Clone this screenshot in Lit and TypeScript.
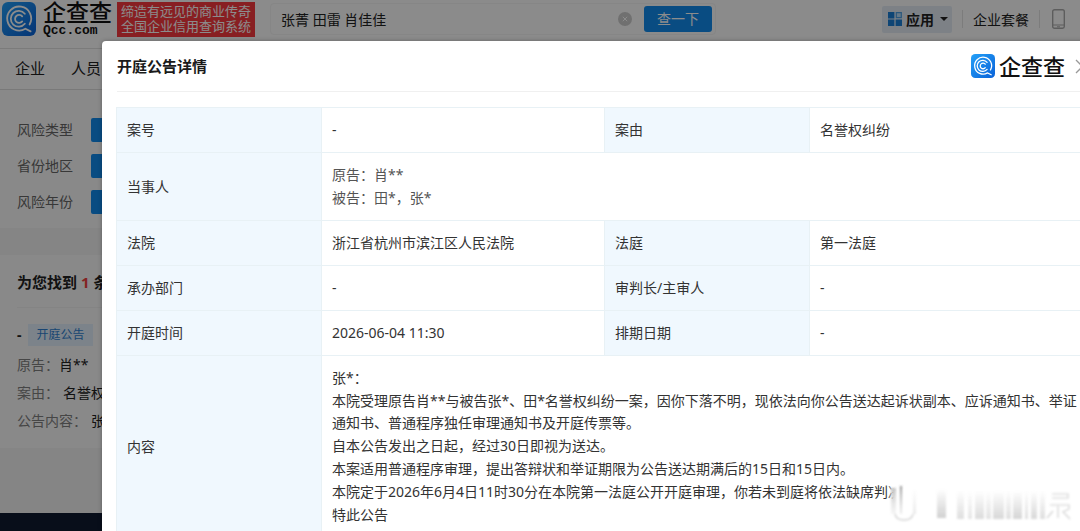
import { LitElement, html, css, svg } from "lit";
import { customElement, property } from "lit/decorators.js";

@customElement("brand-mark")
class BrandMark extends LitElement {
  static styles = css`
    :host { display: block; flex: none; }
    svg { display: block; width: 100%; height: 100%; }
  `;
  render() {
    return html`<svg viewBox="0 0 34 34" aria-hidden="true">
      <defs>
        <linearGradient id="g" x1="0" y1="0" x2="1" y2="1">
          <stop offset="0" stop-color="#23a0f8" />
          <stop offset="1" stop-color="#0a62d8" />
        </linearGradient>
      </defs>
      <rect width="34" height="34" rx="6" fill="url(#g)" />
      <g fill="none" stroke="#fff" stroke-linecap="round">
        <path d="M27.6 22.5A12 12 0 1 0 23.4 26.8L28.6 29.4" stroke-width="1.8" />
        <path d="M22.8 11.8A7.9 7.9 0 1 0 22.8 21.8" stroke-width="1.8" />
        <path d="M20.2 14.4A4 4 0 1 0 20.2 19.4" stroke-width="1.8" />
      </g>
    </svg>`;
  }
}

@customElement("site-page")
class SitePage extends LitElement {
  static styles = css`
    :host { display: flex; flex-direction: column; min-height: 100vh; background: #f2f2f2; color: #222; }
    * { box-sizing: border-box; }
    a { color: inherit; text-decoration: none; }
    button, input { font: inherit; color: inherit; border: 0; margin: 0; padding: 0; background: none; }
    .top { display: flex; align-items: center; height: 38px; padding: 0 15px 0 2px; background: #fdfdfd; }
    .logo { display: flex; align-items: center; gap: 7px; }
    .mark { width: 34px; height: 34px; }
    .words { display: flex; flex-direction: column; width: 72px; color: #111; font-family: "Liberation Sans", "Noto Sans CJK SC", sans-serif; }
    .cn { font-size: 23px; line-height: 24px; white-space: nowrap; font-weight: 500; }
    .en { font: bold 13px/12px "Liberation Mono", monospace; }
    .slogan { margin-left: 2px; padding: 2px 4px; background: #f8393e; color: #fff; font-family: "Liberation Sans", "Noto Sans CJK SC", sans-serif; font-size: 13px; line-height: 15px; white-space: nowrap; height: 35px; }
    .search { display: flex; align-items: center; height: 32px; width: 446px; margin-left: 15px; padding: 0 3px 0 10px; border: 1px solid #f4f4f4; border-radius: 4px; }
    .search input { flex: 1; min-width: 0; font-size: 14px; outline: 0; }
    .clear { display: block; width: 14px; height: 14px; margin-right: 12px; }
    .clear svg, .phone svg, .grid { display: block; }
    .go { width: 68px; height: 26px; border-radius: 3px; background: #128bed; color: #fff; font-size: 14px; line-height: 26px; }
    .right { display: flex; align-items: center; margin-left: auto; font-size: 14px; }
    .apps { display: flex; align-items: center; gap: 4px; height: 27px; padding: 0 4px 0 6px; border-radius: 2px; background: #e3ebf5; font-weight: 700; }
    .caret { border: 4px solid transparent; border-top-color: #222; border-bottom: 0; margin-left: 2px; }
    .sep { width: 1px; height: 18px; background: #e2e2e2; margin: 0 10px; }
    .phone { margin-left: 2px; }
    .band { height: 11px; background: #fdfdfd; border-bottom: 1px solid #e0e0e0; }
    .nav { display: flex; gap: 26px; height: 41px; padding: 0 15px; background: #fdfdfd; border-bottom: 1px solid #ddd; font-size: 15px; line-height: 38px; }
    .filters { display: grid; gap: 12px; padding: 28px 17px 14px; background: #fafafa; color: #666; font-size: 14px; line-height: 24px; }
    .filter { display: flex; gap: 18px; }
    .pick { width: 68px; height: 24px; border-radius: 2px; background: #128bed; color: #fff; font-size: 13px; }
    .results { margin-top: 27px; padding: 15px 17px 13px; background: #fafafa; font-size: 14px; }
    h2 { margin: 0; font-size: 15px; line-height: 24px; padding-bottom: 13px; border-bottom: 1px solid #f1f1f1; white-space: nowrap; }
    .num { color: #f04040; }
    .head { display: flex; align-items: center; gap: 7px; margin-top: 16px; line-height: 22px; font-weight: 700; }
    .tag { padding: 0 8px; background: #e2effb; color: #2f7fd0; font-size: 12px; font-weight: 400; line-height: 22px; }
    dl { margin: 5px 0 0; line-height: 28px; }
    .pair { display: flex; white-space: nowrap; }
    dt { color: #808080; }
    dd { margin: 0; }
    .gap dd { margin-left: 4px; }
    .foot { flex: 1; margin-top: 65px; background: #101a30; min-height: 18px; }
  `;
  render() {
    return html`
      <header class="top">
        <a class="logo" href="#">
          <brand-mark class="mark"></brand-mark>
          <span class="words"><span class="cn">企查查</span><span class="en">Qcc.com</span></span>
        </a>
        <div class="slogan">缔造有远见的商业传奇<br />全国企业信用查询系统</div>
        <form class="search" @submit=${(e: Event) => e.preventDefault()}>
          <input aria-label="搜索" .value=${"张菁 田雷 肖佳佳"} />
          <button class="clear" type="button" aria-label="清除">
            <svg width="14" height="14" viewBox="0 0 14 14"><circle cx="7" cy="7" r="7" fill="#ccc" /><path d="M4.8 4.8l4.4 4.4M9.2 4.8L4.8 9.2" stroke="#fff" /></svg>
          </button>
          <button class="go">查一下</button>
        </form>
        <div class="right">
          <button class="apps">
            <svg class="grid" width="14" height="14" viewBox="0 0 14 14"><g fill="#1a7fd6"><path d="M0 0h6.4v6.4H0zM0 7.6h6.4V14H0zM7.6 7.6H14V14H7.6z" /></g><path d="M8.3.7h5v5h-5z" fill="#b9dcf8" stroke="#4d9fe2" stroke-width="1.2" /></svg>
            <span>应用</span><span class="caret"></span>
          </button>
          <span class="sep"></span>
          <a href="#">企业套餐</a>
          <span class="sep"></span>
          <a class="phone" href="#" aria-label="手机版">
            <svg width="13" height="20" viewBox="0 0 13 20" fill="none" stroke="#aaa"><rect x=".7" y=".7" width="11.6" height="18.6" rx="1.8" stroke-width="1.4" /><path d="M1 16h11" /><path d="M5 17.8h3" /></svg>
          </a>
        </div>
      </header>
      <div class="band"></div>
      <nav class="nav"><a href="#">企业</a><a href="#">人员</a></nav>
      <section class="filters">
        ${["风险类型", "省份地区", "风险年份"].map((t) => html`<div class="filter"><span>${t}</span><button class="pick" aria-label=${t}></button></div>`)}
      </section>
      <section class="results">
        <h2>为您找到 <span class="num">1</span> 条</h2>
        <div class="head"><span>-</span><span class="tag">开庭公告</span></div>
        <dl>
          <div class="pair"><dt>原告：</dt><dd>肖**</dd></div>
          <div class="pair gap"><dt>案由：</dt><dd>名誉权纠纷</dd></div>
          <div class="pair gap"><dt>公告内容：</dt><dd>张*：</dd></div>
        </dl>
      </section>
      <footer class="foot"></footer>
    `;
  }
}

@customElement("notice-dialog")
class NoticeDialog extends LitElement {
  @property({ attribute: false }) content: string[] = [
    "张*：",
    "本院受理原告肖**与被告张*、田*名誉权纠纷一案，因你下落不明，现依法向你公告送达起诉状副本、应诉通知书、举证通知书、普通程序独任审理通知书及开庭传票等。",
    "自本公告发出之日起，经过30日即视为送达。",
    "本案适用普通程序审理，提出答辩状和举证期限为公告送达期满后的15日和15日内。",
    "本院定于2026年6月4日11时30分在本院第一法庭公开开庭审理，你若未到庭将依法缺席判决。",
    "特此公告",
  ];
  static styles = css`
    :host { display: flex; flex-direction: column; background: #fff; border-radius: 4px 0 0 0; color: #333; font-size: 14px; }
    * { box-sizing: border-box; }
    .head { display: flex; align-items: center; height: 51px; margin: 0 14px 0 15px; border-bottom: 1px solid #f0f0f0; flex: none; }
    h1 { margin: 0; font-size: 15px; line-height: 22px; color: #1a1a1a; }
    .brand { display: flex; align-items: center; gap: 4px; margin-left: auto; color: #111; font-size: 22px; line-height: 26px; font-weight: 500; }
    .mark { width: 24px; height: 24px; }
    .close { margin-left: 10px; padding: 0; border: 0; background: none; }
    .close svg { display: block; }
    .body { padding: 15px 14px 0; }
    table { width: 100%; border-collapse: collapse; table-layout: fixed; }
    .label { width: 205px; }
    .value { width: 283px; }
    th, td { border: 1px solid #e8f1f5; padding: 11px 10px; line-height: 22px; text-align: left; vertical-align: middle; font-weight: 400; }
    th { background: #f0f8fe; }
    .party { color: #555; }
    p { margin: 0; }
    .text { display: grid; gap: 1px; }
  `;
  render() {
    return html`
      <header class="head">
        <h1>开庭公告详情</h1>
        <div class="brand"><brand-mark class="mark"></brand-mark><span>企查查</span></div>
        <button class="close" aria-label="关闭"><svg width="15" height="15" viewBox="0 0 15 15"><path d="M1 1l13 13M14 1L1 14" stroke="#999" stroke-width="1.3" /></svg></button>
      </header>
      <div class="body">
        <table>
          <colgroup><col class="label" /><col class="value" /><col class="label" /><col /></colgroup>
          <tbody>
            <tr><th scope="row">案号</th><td>-</td><th scope="row">案由</th><td>名誉权纠纷</td></tr>
            <tr><th scope="row">当事人</th><td class="party" colspan="3"><div class="text"><p>原告：肖**</p><p>被告：田*，张*</p></div></td></tr>
            <tr><th scope="row">法院</th><td>浙江省杭州市滨江区人民法院</td><th scope="row">法庭</th><td>第一法庭</td></tr>
            <tr><th scope="row">承办部门</th><td>-</td><th scope="row">审判长/主审人</th><td>-</td></tr>
            <tr><th scope="row">开庭时间</th><td>2026-06-04 11:30</td><th scope="row">排期日期</th><td>-</td></tr>
            <tr><th scope="row">内容</th><td colspan="3"><div class="text">${this.content.map((t) => html`<p>${t}</p>`)}</div></td></tr>
          </tbody>
        </table>
      </div>
    `;
  }
}

const streaks = [
  [69, 7, 0.2], [80, 4, 0.16], [87, 9, 0.22], [98, 5, 0.18], [105, 11, 0.24], [118, 5, 0.2],
  [125, 9, 0.26], [137, 3, 0.2], [143, 6, 0.24], [152, 5, 0.2],
];

@customElement("app-root")
class AppRoot extends LitElement {
  static styles = css`
    :host { display: block; position: relative; height: 100vh; overflow: hidden; font-family: "Noto Sans", "Noto Sans CJK SC", sans-serif; }
    .mask { position: absolute; inset: 0; display: flex; padding: 41px 0 0 102px; background: rgba(0, 0, 0, 0.45); }
    .dialog { flex: 1; min-width: 0; margin-right: -24px; box-shadow: 0 0 4px rgba(0, 0, 0, 0.3); }
    .stamp { position: absolute; right: 0; bottom: 5px; width: 192px; height: 44px; }
  `;
  render() {
    return html`
      <site-page></site-page>
      <div class="mask"><notice-dialog class="dialog" role="dialog" aria-label="开庭公告详情"></notice-dialog></div>
      <svg class="stamp" viewBox="0 0 192 44" aria-hidden="true">
        <defs>
          <linearGradient id="cover" x1="0" x2="1"><stop offset="0" stop-color="#fff" stop-opacity="0" /><stop offset=".03" stop-color="#fff" /></linearGradient>
          <linearGradient id="down" x1="0" y1="0" x2="0" y2="1"><stop offset="0" stop-color="#999" stop-opacity=".05" /><stop offset="1" stop-color="#999" /></linearGradient>
          <linearGradient id="up" x1="0" y1="0" x2="0" y2="1"><stop offset="0" stop-color="#555" /><stop offset="1" stop-color="#bbb" stop-opacity=".4" /></linearGradient>
          <filter id="soft"><feGaussianBlur stdDeviation="1.1 0.8" /></filter>
        </defs>
        <rect y="3" width="192" height="39" fill="url(#cover)" />
        <g filter="url(#soft)">
          <rect x="3" y="6" width="5" height="26" fill="url(#up)" opacity=".35" />
          <rect x="12" y="4" width="2" height="28" fill="url(#up)" opacity=".65" />
          <path d="M7 32q1 6 9 6t9-6" fill="none" stroke="#aaa" stroke-width="1.5" opacity=".5" />
          <rect x="25" y="8" width="3" height="24" fill="url(#down)" opacity=".2" />
          <rect x="49" y="8" width="9" height="28" fill="url(#down)" opacity=".45" />
          ${streaks.map(([x, w, o]) => svg`<rect x=${x} y="10" width=${w} height="27" fill="url(#down)" opacity=${o * 1.6} />`)}
          <path d="M164 12h16v4h-16M162 23h19v4l-6 3 7 7M170 24v12M165 29l-6 7" fill="none" stroke="#999" stroke-width="1.2" opacity=".45" />
        </g>
      </svg>
    `;
  }
}
